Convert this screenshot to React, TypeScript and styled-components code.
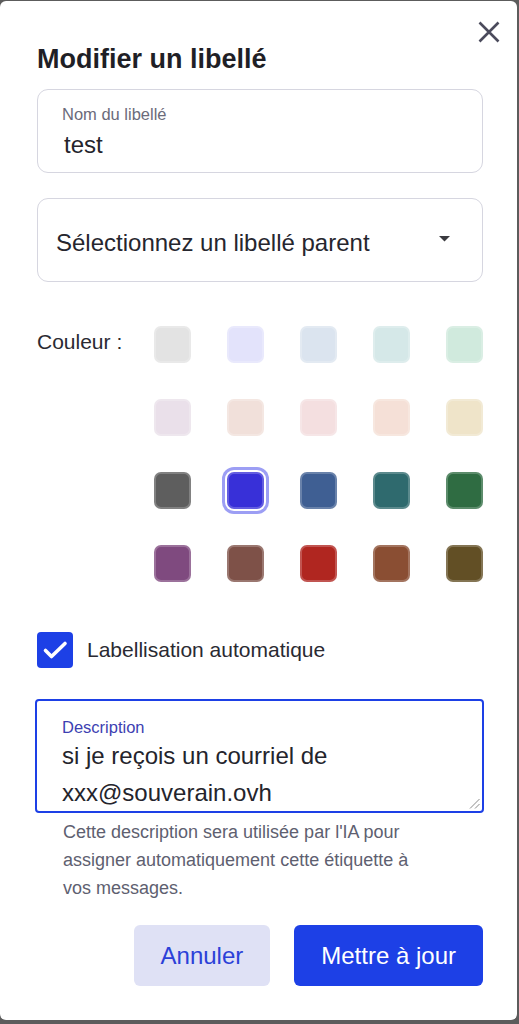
import styled, { createGlobalStyle } from "styled-components";

const GlobalStyle = createGlobalStyle`
  html, body {
    margin: 0;
    padding: 0;
    background: #5c5c5c;
  }
  body {
    font-family: "Liberation Sans", Arial, sans-serif;
  }
  * {
    box-sizing: border-box;
  }
`;

const SWATCHES = [
  "#e3e3e3", "#e3e3fb", "#dbe4ef", "#d5e8e8", "#d0eadd",
  "#eae0ea", "#f1e0da", "#f4dfe0", "#f5e0d7", "#efe4c9",
  "#5e5e5e", "#3830d8", "#3f5f93", "#2f6a6e", "#2f6c42",
  "#7f4a7f", "#7e5148", "#b02620", "#8a4e33", "#624f25",
];

const SELECTED = 11;

function App() {
  return (
    <>
      <GlobalStyle />
      <Dialog>
        <CloseButton aria-label="Fermer">
          <svg width="24" height="24" viewBox="0 0 24 24">
            <path
              d="M2.5 2.5 L21.5 21.5 M21.5 2.5 L2.5 21.5"
              stroke="#4b4b5c"
              strokeWidth="2.6"
              fill="none"
            />
          </svg>
        </CloseButton>

        <Title>Modifier un libellé</Title>

        <Field>
          <FieldLabel>Nom du libellé</FieldLabel>
          <FieldValue>test</FieldValue>
        </Field>

        <Select>
          <span>Sélectionnez un libellé parent</span>
          <svg width="11" height="6" viewBox="0 0 11 6">
            <path d="M0 0 H11 L5.5 5.5 Z" fill="#3a3a3f" />
          </svg>
        </Select>

        <ColorSection>
          <ColorLabel>Couleur :</ColorLabel>
          <Palette>
            {SWATCHES.map((c, i) => (
              <Swatch key={c} $color={c} $selected={i === SELECTED} />
            ))}
          </Palette>
        </ColorSection>

        <CheckRow>
          <CheckBox>
            <svg width="36" height="36" viewBox="0 0 36 36">
              <path
                d="M8.5 18.5 L14.5 24.5 L28 11.5"
                stroke="#fff"
                strokeWidth="3.6"
                strokeLinecap="round"
                strokeLinejoin="round"
                fill="none"
              />
            </svg>
          </CheckBox>
          <CheckLabel>Labellisation automatique</CheckLabel>
        </CheckRow>

        <TextAreaBox>
          <FieldLabel $focused>Description</FieldLabel>
          <AreaText>
            si je reçois un courriel de
            <br />
            xxx@souverain.ovh
          </AreaText>
          <ResizeHandle width="11" height="11" viewBox="0 0 11 11">
            <path
              d="M10.5 1 L1 10.5 M10.5 6 L6 10.5"
              stroke="#8a8a8a"
              strokeWidth="1"
              fill="none"
            />
          </ResizeHandle>
        </TextAreaBox>

        <Helper>
          Cette description sera utilisée par l'IA pour assigner
          automatiquement cette étiquette à vos messages.
        </Helper>

        <Actions>
          <Button $variant="secondary">Annuler</Button>
          <Button $variant="primary">Mettre à jour</Button>
        </Actions>
      </Dialog>
    </>
  );
}

export default App;

const Dialog = styled.div`
  position: relative;
  width: 517px;
  height: 1019px;
  margin-top: 1px;
  background: #ffffff;
  border-radius: 6px;
  padding: 42px 34px 0 37px;
  display: flex;
  flex-direction: column;
`;

const CloseButton = styled.button`
  position: absolute;
  top: 19px;
  right: 16px;
  width: 24px;
  height: 24px;
  padding: 0;
  border: none;
  background: none;
  display: flex;
  cursor: pointer;
`;

const Title = styled.h2`
  margin: 0;
  font-size: 27px;
  line-height: 32px;
  font-weight: 700;
  color: #1f1f26;
`;

const Field = styled.div`
  margin-top: 14px;
  height: 84px;
  border: 1px solid #d6d6e0;
  border-radius: 11px;
  padding: 14px 24px 0;
  display: flex;
  flex-direction: column;
  gap: 6px;
`;

const FieldLabel = styled.div<{ $focused?: boolean }>`
  font-size: 16.5px;
  line-height: 20px;
  color: ${(p) => (p.$focused ? "#3d3fb2" : "#6b6b7b")};
`;

const FieldValue = styled.div`
  margin-left: 2px;
  font-size: 24px;
  line-height: 30px;
  color: #24242c;
`;

const Select = styled.div`
  margin-top: 25px;
  height: 84px;
  border: 1px solid #d6d6e0;
  border-radius: 11px;
  padding: 5px 32px 0 18px;
  display: flex;
  align-items: center;
  justify-content: space-between;
  font-size: 24px;
  line-height: 30px;
  color: #26262e;

  svg {
    margin-top: -7px;
  }
`;

const ColorSection = styled.div`
  margin-top: 44px;
  display: grid;
  grid-template-columns: 117px 1fr;
`;

const ColorLabel = styled.div`
  padding-top: 4px;
  font-size: 21px;
  line-height: 24px;
  color: #2a2a32;
`;

const Palette = styled.div`
  display: grid;
  grid-template-columns: repeat(5, 37px);
  column-gap: 36px;
  row-gap: 36px;
`;

const Swatch = styled.div<{ $color: string; $selected: boolean }>`
  width: 37px;
  height: 37px;
  border-radius: 7px;
  background: ${(p) => p.$color};
  border: 2px solid rgba(255, 255, 255, 0.22);
  box-shadow: ${(p) =>
    p.$selected ? "0 0 0 2px #ffffff, 0 0 0 5px #9c9ef4" : "none"};
  cursor: pointer;
`;

const CheckRow = styled.div`
  margin-top: 50px;
  display: flex;
  align-items: center;
  gap: 14px;
`;

const CheckBox = styled.div`
  width: 36px;
  height: 36px;
  border-radius: 4px;
  background: #1d40e6;
  display: flex;
`;

const CheckLabel = styled.span`
  font-size: 21px;
  line-height: 24px;
  color: #2a2a32;
`;

const TextAreaBox = styled.div`
  position: relative;
  margin: 31px -1px 0 -2px;
  height: 114px;
  border: 2px solid #1d40e6;
  border-radius: 4px;
  padding: 16px 24px 0 25px;
  overflow: hidden;
`;

const AreaText = styled.div`
  font-size: 24px;
  line-height: 37px;
  color: #24242c;
`;

const ResizeHandle = styled.svg`
  position: absolute;
  right: 2px;
  bottom: 2px;
`;

const Helper = styled.p`
  margin: 5px 0 0;
  padding-left: 26px;
  max-width: 400px;
  font-size: 18px;
  line-height: 28px;
  color: #5e6070;
`;

const Actions = styled.div`
  margin-top: 23px;
  display: flex;
  justify-content: flex-end;
  gap: 24px;
`;

const Button = styled.button<{ $variant: "primary" | "secondary" }>`
  height: 61px;
  padding: 0 27px;
  border: none;
  border-radius: 6px;
  font-family: "Liberation Sans", Arial, sans-serif;
  font-size: 24px;
  cursor: pointer;
  background: ${(p) => (p.$variant === "primary" ? "#1d40e6" : "#dfe1f5")};
  color: ${(p) => (p.$variant === "primary" ? "#ffffff" : "#2b40d8")};
`;
